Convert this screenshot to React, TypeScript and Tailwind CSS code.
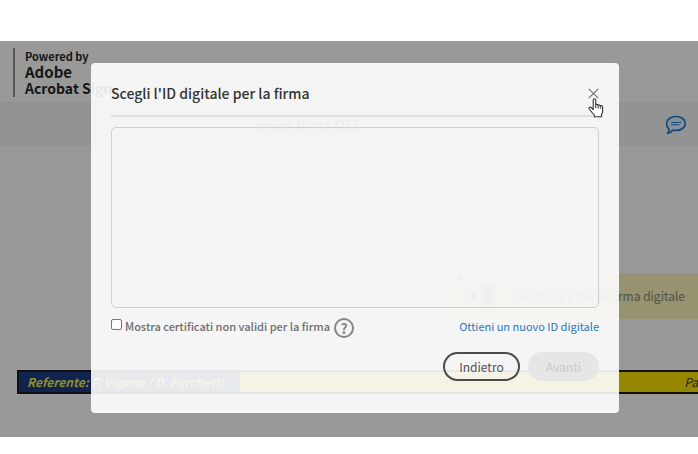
function CommentIcon() {
  return (
    <svg viewBox="0 0 22 20" className="h-5 w-[22px]" fill="none" aria-hidden="true">
      <path
        d="M11 1.500c5.200 0 9.300 3 9.300 7s-4.100 7-9.300 7c-1 0-2-.1-3-.4-1.300 1.900-3.200 3-5.400 3.200.9-1.100 1.400-2.400 1.400-4.100C2.400 12.900 1.500 10.900 1.500 8.500c0-4 4.200-7 9.500-7Z"
        fill="#849199"
        stroke="#174a78"
        strokeWidth="1.700"
        strokeLinejoin="round"
      />
      <path d="M6.500 7.500h9.500M6.500 9.700h7.500" stroke="#174a78" strokeWidth="1" strokeLinecap="round" />
    </svg>
  );
}

function RibbonIcon() {
  return (
    <svg viewBox="0 0 32 24" className="h-6 w-8 shrink-0" aria-hidden="true">
      <path d="M2 9l5 6M7 9l-5 6" stroke="#444" strokeWidth="2" />
      <path d="M1 18.500h14" stroke="#777" strokeWidth="1" />
      <circle cx="19" cy="9" r="7.500" fill="#555" />
      <circle cx="19" cy="9" r="5" fill="none" stroke="#979270" strokeWidth="1.200" />
      <path d="M15.500 15h7v8l-3.500-3-3.500 3Z" fill="#555" />
    </svg>
  );
}

function HandCursor() {
  return (
    <svg viewBox="0 0 16 20" className="h-5 w-4" aria-hidden="true">
      <path
        d="M5.200 11.500V2.300c0-2 2.500-2 2.500 0v4.500c.6-.8 2.200-.6 2.400.5.700-.7 2-.4 2.200.6.900-.6 2.300-.1 2.300 1.200v4.100c0 1.600-.5 2.500-1.100 3.400v2.100H6.300v-1.800C4.300 15.300 2.800 13 1.200 10.800.5 9.600 2 8.600 3.100 9.500Z"
        fill="#fff"
        stroke="#333"
        strokeWidth="1.100"
        strokeLinejoin="round"
      />
      <path d="M7.700 6.800v3.400M10.100 7.400v3M12.300 8.200v2.500" stroke="#333" strokeWidth="1" />
    </svg>
  );
}

function DocumentPage() {
  return (
    <div className="h-[396px] overflow-hidden bg-[#999]">
      <header className="flex h-[62px] items-start border-b border-[#929292] pt-[7px] pl-[13px]">
        <div className="h-[49px] border-l-2 border-[#555] pl-[10px] font-bold text-[#151515]">
          <p className="text-[11px] leading-4">Powered by</p>
          <p className="text-[15px] leading-4">Adobe</p>
          <p className="text-[14px] leading-4">Acrobat Sign</p>
        </div>
      </header>

      <div className="flex h-[43px] items-center justify-between bg-[#939393] pr-[11px] pl-64">
        <h1 className="text-[14px] leading-5 text-[#444]">prova firma QES</h1>
        <button type="button" aria-label="Commenti">
          <CommentIcon />
        </button>
      </div>

      <div className="relative mt-[127px] ml-[453px] flex h-[46px] items-center gap-1 bg-[#979270] pr-[13px] pl-4">
        <span className="absolute top-0 left-[3px] text-[14px] leading-4 font-bold text-[#b03030]">*</span>
        <RibbonIcon />
        <span className="flex-1 text-right text-[12px] leading-5 whitespace-nowrap text-[#505047]">
          Fai clic qui per la firma digitale
        </span>
      </div>

      <div className="mt-[51px] ml-[17px] flex h-6 border-y-2 border-l-2 border-[#111] text-[12px] leading-5 italic">
        <div className="w-[221px] bg-[#10234f] pl-2 font-bold whitespace-nowrap text-[#8e8c2d]">
          Referente: P. Vigano / D. Furchetti
        </div>
        <div className="flex-1 bg-[#958700] text-right text-[#222]">Pa</div>
      </div>
    </div>
  );
}

function DigitalIdDialog() {
  return (
    <section
      role="dialog"
      aria-labelledby="dialog-title"
      className="h-[350px] rounded bg-white/90 px-5 pt-5 text-[#6b6b6b]"
    >
      <div className="flex h-[34px] items-start justify-between border-b-2 border-[#e0e0e0]">
        <h2 id="dialog-title" className="text-[14px] leading-5 font-medium text-[#333]">
          Scegli l'ID digitale per la firma
        </h2>
        <button type="button" aria-label="Chiudi" className="relative mt-[5px]">
          <svg viewBox="0 0 10 10" className="h-[11px] w-[11px]" stroke="#6e6e6e" aria-hidden="true">
            <path d="M.7.7l8.600 8.600M9.300.7L.7 9.300" strokeWidth="1" />
          </svg>
          <span className="absolute top-2.5 left-0">
            <HandCursor />
          </span>
        </button>
      </div>

      <div className="mt-[10px] h-[181px] rounded-[5px] border border-[#cfcfcf]" />

      <div className="mt-1.5 flex items-center justify-between text-[11px] leading-5">
        <div className="flex items-center">
          <label className="flex items-center gap-[3px] font-medium text-[#6e6e6e]">
            <input
              type="checkbox"
              className="mb-1 h-[11px] w-[11px] appearance-none rounded-[2px] border border-[#777] bg-white"
            />
            Mostra certificati non validi per la firma
          </label>
          <button
            type="button"
            aria-label="Aiuto"
            className="mt-1 ml-1 flex h-5 w-5 items-center justify-center rounded-full border-2 border-[#858585] text-[14px] leading-4 font-bold text-[#858585]"
          >
            ?
          </button>
        </div>
        <a href="#" className="text-[#2a76bd]">
          Ottieni un nuovo ID digitale
        </a>
      </div>

      <div className="mt-3.5 flex justify-end gap-2 text-[12px] leading-5">
        <button type="button" className="h-[29px] w-[77px] rounded-full border-2 border-[#4b4b4b] text-[#505050]">
          Indietro
        </button>
        <button type="button" disabled className="h-[29px] w-[71px] rounded-full bg-[#e6e6e6] text-[#cacaca]">
          Avanti
        </button>
      </div>
    </section>
  );
}

export default function App() {
  return (
    <main className="relative min-h-screen bg-white pt-[41px] font-['Noto_Sans_CJK_SC','Noto_Sans',sans-serif]">
      <DocumentPage />
      <div className="absolute inset-x-0 top-[63px] pr-[79px] pl-[91px]">
        <DigitalIdDialog />
      </div>
    </main>
  );
}
